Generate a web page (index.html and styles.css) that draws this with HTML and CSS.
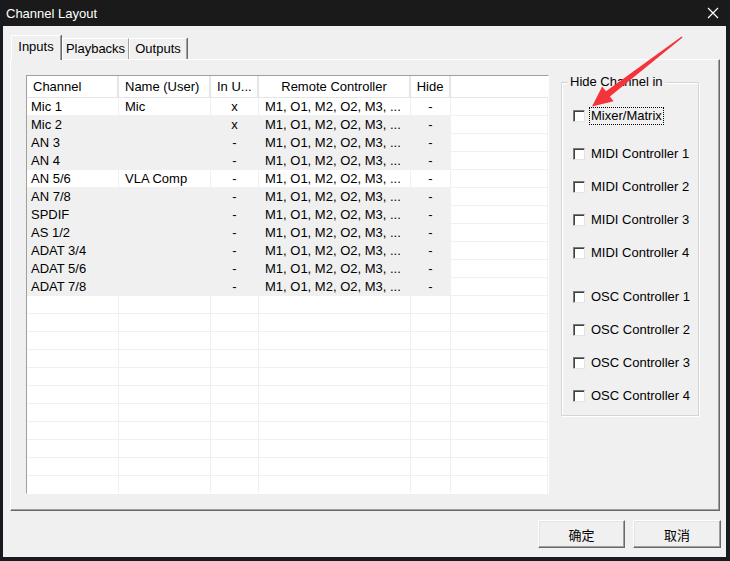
FILE: index.html
```html
<!DOCTYPE html>
<html>
<head>
<meta charset="utf-8">
<link rel="stylesheet" href="styles.css">
</head>
<body>
<div class="window">
  <div class="titlebar">
    <span class="title">Channel Layout</span>
    <svg class="close" width="12" height="12" viewBox="0 0 12 12"><path d="M1 1L11 11M11 1L1 11" stroke="#fff" stroke-width="1.2" fill="none"/></svg>
  </div>
  <div class="content">
    <div class="tabs">
      <div class="tab tab-active tab-inputs">Inputs</div>
      <div class="tab tab-playbacks">Playbacks</div>
      <div class="tab tab-outputs">Outputs</div>
    </div>
    <div class="panel">
      <div class="list">
        <div class="grid header">
          <div class="hcell">Channel</div>
          <div class="hcell">Name (User)</div>
          <div class="hcell">In U...</div>
          <div class="hcell center">Remote Controller</div>
          <div class="hcell center">Hide</div>
          <div class="hcell filler"></div>
        </div>
        <div class="grid row white"><div class="cell first">Mic 1</div><div class="cell">Mic</div><div class="cell center">x</div><div class="cell">M1, O1, M2, O2, M3, ...</div><div class="cell center">-</div><div class="cell filler"></div></div>
        <div class="grid row"><div class="cell first">Mic 2</div><div class="cell"></div><div class="cell center">x</div><div class="cell">M1, O1, M2, O2, M3, ...</div><div class="cell center">-</div><div class="cell filler"></div></div>
        <div class="grid row"><div class="cell first">AN 3</div><div class="cell"></div><div class="cell center">-</div><div class="cell">M1, O1, M2, O2, M3, ...</div><div class="cell center">-</div><div class="cell filler"></div></div>
        <div class="grid row"><div class="cell first">AN 4</div><div class="cell"></div><div class="cell center">-</div><div class="cell">M1, O1, M2, O2, M3, ...</div><div class="cell center">-</div><div class="cell filler"></div></div>
        <div class="grid row white"><div class="cell first">AN 5/6</div><div class="cell">VLA Comp</div><div class="cell center">-</div><div class="cell">M1, O1, M2, O2, M3, ...</div><div class="cell center">-</div><div class="cell filler"></div></div>
        <div class="grid row"><div class="cell first">AN 7/8</div><div class="cell"></div><div class="cell center">-</div><div class="cell">M1, O1, M2, O2, M3, ...</div><div class="cell center">-</div><div class="cell filler"></div></div>
        <div class="grid row"><div class="cell first">SPDIF</div><div class="cell"></div><div class="cell center">-</div><div class="cell">M1, O1, M2, O2, M3, ...</div><div class="cell center">-</div><div class="cell filler"></div></div>
        <div class="grid row"><div class="cell first">AS 1/2</div><div class="cell"></div><div class="cell center">-</div><div class="cell">M1, O1, M2, O2, M3, ...</div><div class="cell center">-</div><div class="cell filler"></div></div>
        <div class="grid row"><div class="cell first">ADAT 3/4</div><div class="cell"></div><div class="cell center">-</div><div class="cell">M1, O1, M2, O2, M3, ...</div><div class="cell center">-</div><div class="cell filler"></div></div>
        <div class="grid row"><div class="cell first">ADAT 5/6</div><div class="cell"></div><div class="cell center">-</div><div class="cell">M1, O1, M2, O2, M3, ...</div><div class="cell center">-</div><div class="cell filler"></div></div>
        <div class="grid row"><div class="cell first">ADAT 7/8</div><div class="cell"></div><div class="cell center">-</div><div class="cell">M1, O1, M2, O2, M3, ...</div><div class="cell center">-</div><div class="cell filler"></div></div>
        <div class="grid row white"><div class="cell"></div><div class="cell"></div><div class="cell"></div><div class="cell"></div><div class="cell"></div><div class="cell filler"></div></div>
        <div class="grid row white"><div class="cell"></div><div class="cell"></div><div class="cell"></div><div class="cell"></div><div class="cell"></div><div class="cell filler"></div></div>
        <div class="grid row white"><div class="cell"></div><div class="cell"></div><div class="cell"></div><div class="cell"></div><div class="cell"></div><div class="cell filler"></div></div>
        <div class="grid row white"><div class="cell"></div><div class="cell"></div><div class="cell"></div><div class="cell"></div><div class="cell"></div><div class="cell filler"></div></div>
        <div class="grid row white"><div class="cell"></div><div class="cell"></div><div class="cell"></div><div class="cell"></div><div class="cell"></div><div class="cell filler"></div></div>
        <div class="grid row white"><div class="cell"></div><div class="cell"></div><div class="cell"></div><div class="cell"></div><div class="cell"></div><div class="cell filler"></div></div>
        <div class="grid row white"><div class="cell"></div><div class="cell"></div><div class="cell"></div><div class="cell"></div><div class="cell"></div><div class="cell filler"></div></div>
        <div class="grid row white"><div class="cell"></div><div class="cell"></div><div class="cell"></div><div class="cell"></div><div class="cell"></div><div class="cell filler"></div></div>
        <div class="grid row white"><div class="cell"></div><div class="cell"></div><div class="cell"></div><div class="cell"></div><div class="cell"></div><div class="cell filler"></div></div>
        <div class="grid row white"><div class="cell"></div><div class="cell"></div><div class="cell"></div><div class="cell"></div><div class="cell"></div><div class="cell filler"></div></div>
        <div class="grid row white"><div class="cell"></div><div class="cell"></div><div class="cell"></div><div class="cell"></div><div class="cell"></div><div class="cell filler"></div></div>
      </div>
      <div class="group">
        <div class="group-label">Hide Channel in</div>
        <div class="check"><span class="box"></span><span class="label focus">Mixer/Matrix</span></div>
        <div class="check gap-l"><span class="box"></span><span class="label">MIDI Controller 1</span></div>
        <div class="check"><span class="box"></span><span class="label">MIDI Controller 2</span></div>
        <div class="check"><span class="box"></span><span class="label">MIDI Controller 3</span></div>
        <div class="check"><span class="box"></span><span class="label">MIDI Controller 4</span></div>
        <div class="check gap-xl"><span class="box"></span><span class="label">OSC Controller 1</span></div>
        <div class="check"><span class="box"></span><span class="label">OSC Controller 2</span></div>
        <div class="check"><span class="box"></span><span class="label">OSC Controller 3</span></div>
        <div class="check"><span class="box"></span><span class="label">OSC Controller 4</span></div>
      </div>
    </div>
    <div class="buttons">
      <div class="btn btn-ok">确定</div>
      <div class="btn btn-cancel">取消</div>
    </div>
  </div>
</div>
<svg class="arrow" width="730" height="561" viewBox="0 0 730 561">
  <polygon points="682.6,37.6 609.9,96.4 613.6,101.2 592,106.5 602.2,86.5 606.0,91.3 681.6,36.4" fill="#f5333a"/>
</svg>
</body>
</html>
```

FILE: styles.css
```css
* { box-sizing: border-box; }
html, body { margin: 0; padding: 0; }
body {
  width: 730px;
  height: 561px;
  background: #171a1f;
  font-family: "Liberation Sans", "Noto Sans CJK SC", sans-serif;
  font-size: 13px;
  color: #000;
  overflow: hidden;
  position: relative;
}
.window {
  margin-left: 3px;
  width: 723px;
  height: 557px;
  background: #f0f0f0;
  display: flex;
  flex-direction: column;
}
.titlebar {
  height: 26px;
  background: #1a1a1a;
  color: #fff;
  display: flex;
  align-items: center;
  justify-content: space-between;
  padding: 0 7px 0 3px;
}
.title { font-size: 13px; }
.close { display: block; }
.content {
  padding: 9px 0 0 7px;
  display: flex;
  flex-direction: column;
}
.tabs {
  height: 24px;
  display: flex;
  align-items: flex-end;
  padding-left: 1px;
}
.tab {
  height: 21px;
  display: flex;
  align-items: center;
  justify-content: center;
  border-top: 1px solid #fff;
  border-left: 1px solid #fff;
  border-right: 1px solid #a0a0a0;
  box-shadow: 1px 0 0 #696969;
  padding-bottom: 1px;
}
.tab-active {
  height: 25px;
  margin-bottom: -1px;
  background: #f0f0f0;
  position: relative;
  z-index: 1;
  padding-bottom: 4px;
}
.tab-inputs { width: 50px; }
.tab-playbacks { width: 67px; margin-left: 1px; }
.tab-outputs { width: 58px; }
.panel {
  width: 710px;
  height: 452px;
  border-top: 1px solid #fff;
  border-left: 1px solid #fff;
  border-right: 1px solid #696969;
  border-bottom: 1px solid #696969;
  box-shadow: inset -1px -1px 0 #a0a0a0;
  padding: 15px 0 0 15px;
  display: flex;
  align-items: flex-start;
  gap: 12px;
}
.list {
  width: 523px;
  height: 419px;
  border-top: 1px solid #a0a0a0;
  border-left: 1px solid #a0a0a0;
  border-right: 1px solid #fff;
  border-bottom: 1px solid #fff;
  background: #fff;
  overflow: hidden;
}
.grid {
  display: grid;
  grid-template-columns: 92px 92px 48px 152px 40px 1fr;
}
.header {
  height: 22px;
  background: #fff;
  border-bottom: 1px solid #e5e5e5;
}
.hcell {
  padding-left: 6px;
  line-height: 21px;
  border-right: 2px solid #e5e5e5;
  white-space: nowrap;
  overflow: hidden;
}
.hcell.center { padding-left: 0; text-align: center; }
.hcell.filler { border-right: none; }
.row { height: 18px; }
.row .cell { background: #f0f0f0; }
.row .cell.filler { background: #fff; }
.row.white .cell { background: #fff; }
.cell {
  height: 18px;
  line-height: 17px;
  padding-left: 6px;
  border-right: 1px solid #f0f0f0;
  border-bottom: 1px solid #f0f0f0;
  white-space: nowrap;
  overflow: hidden;
}
.cell.first { padding-left: 4px; }
.cell.center { padding-left: 0; text-align: center; }
.group {
  position: relative;
  margin-top: 7px;
  width: 138px;
  height: 334px;
  border: 1px solid #d5d5d5;
  box-shadow: inset 1px 1px 0 #fff, 1px 1px 0 #fff;
  padding: 24px 0 0 11px;
  display: flex;
  flex-direction: column;
  gap: 15px;
}
.group-label {
  position: absolute;
  left: 6px;
  top: -9px;
  background: #f0f0f0;
  padding: 0 2px;
  line-height: 16px;
}
.check {
  height: 18px;
  display: flex;
  align-items: center;
  gap: 4px;
}
.gap-l { margin-top: 5px; }
.gap-xl { margin-top: 11px; }
.box {
  width: 12px;
  height: 12px;
  background: #fff;
  border: 1px solid;
  border-color: #7a7a7a #e3e3e3 #e3e3e3 #7a7a7a;
  box-shadow: inset 1px 1px 0 #404040;
}
.label {
  border: 1px dotted transparent;
  padding: 0 1px;
  line-height: 16px;
  white-space: nowrap;
}
.label.focus { border-color: #000; }
.buttons {
  margin-top: 9px;
  padding-right: 5px;
  display: flex;
  justify-content: flex-end;
  gap: 8px;
  margin-left: -7px;
}
.btn {
  height: 28px;
  display: flex;
  align-items: center;
  justify-content: center;
  font-family: "Noto Sans CJK SC", sans-serif;
  font-size: 13px;
  border: 1px solid;
  border-color: #fff #696969 #696969 #fff;
  box-shadow: inset -1px -1px 0 #a0a0a0, inset 1px 1px 0 #e3e3e3;
  background: #f0f0f0;
}
.btn-ok { width: 87px; }
.btn-cancel { width: 88px; }
.arrow {
  position: absolute;
  left: 0;
  top: 0;
  pointer-events: none;
}
```
